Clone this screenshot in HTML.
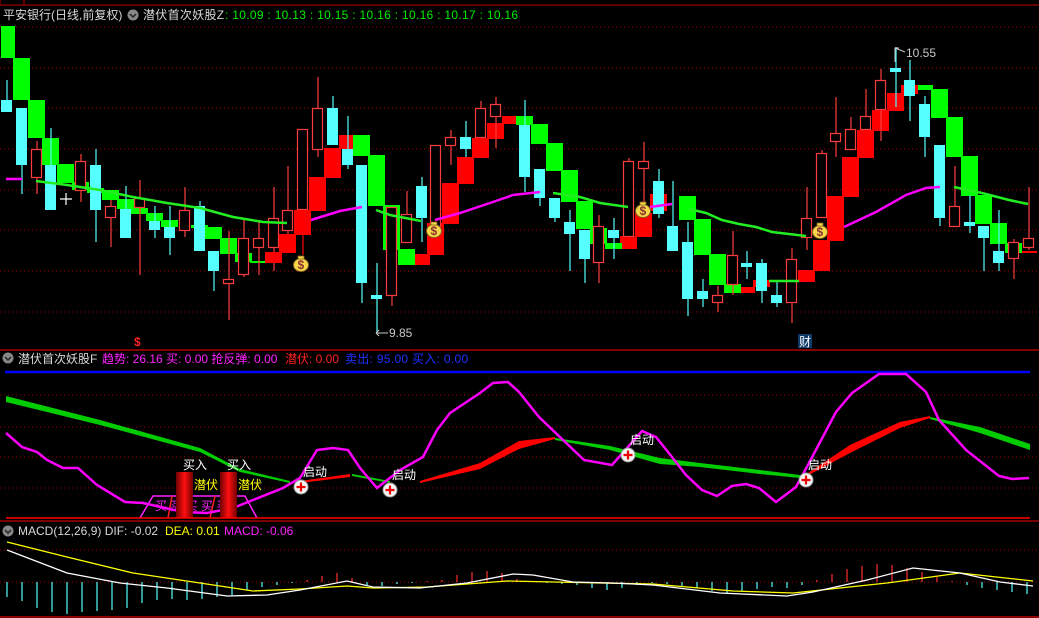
<!DOCTYPE html>
<html><head><meta charset="utf-8"><style>
html,body{margin:0;padding:0;background:#000;width:1039px;height:618px;overflow:hidden}
svg{display:block}
text{font-family:"Liberation Sans","Noto Sans CJK SC",sans-serif;font-size:12px}
</style></head><body>
<svg id="s" width="1039" height="618" viewBox="0 0 1039 618" xmlns="http://www.w3.org/2000/svg">
<g id="grid" stroke="#a00000" stroke-width="1" stroke-dasharray="1,3"></g>
<line x1="24" y1="5" x2="1039" y2="5" stroke="#c00000"/>
<rect x="0" y="-1" width="24" height="6" fill="none" stroke="#c00000"/>
<g id="cd"></g>
<g id="ln" fill="none" stroke-width="2.5"></g>
<text x="3" y="19" fill="#d8d8d8">平安银行(日线,前复权)</text>
<circle cx="133" cy="15" r="5.5" fill="#888"/><path d="M130 14l3 3 3-3" stroke="#222" stroke-width="1.5" fill="none"/>
<text x="143" y="19" fill="#d8d8d8" letter-spacing="0.3">潜伏首次妖股Z</text>
<text x="225" y="19" fill="#00ee00" letter-spacing="0.3">: 10.09 : 10.13 : 10.15 : 10.16 : 10.16 : 10.17 : 10.16</text>
<text x="906" y="57" fill="#c8c8c8">10.55</text>
<path d="M895 62v-14h4M895 48l10 4" stroke="#c8c8c8" fill="none"/>
<text x="389" y="337" fill="#c8c8c8">9.85</text>
<path d="M376 333h12M376 333l3-3M376 333l3 3" stroke="#c8c8c8" fill="none"/>
<text x="134" y="346" fill="#ff2020" font-weight="bold">$</text>
<rect x="798" y="334" width="14" height="14" fill="#103a6a"/>
<text x="799" y="346" fill="#fff">财</text>
<path d="M60 199h12M66 193v12" stroke="#fff" stroke-width="1.2"/>
<g id="bags"></g>
<line x1="0" y1="350" x2="1039" y2="350" stroke="#d00000" stroke-width="1.2"/>
<circle cx="8" cy="358" r="5.5" fill="#888"/><path d="M5 357l3 3 3-3" stroke="#222" stroke-width="1.5" fill="none"/>
<text x="18" y="363" fill="#d8d8d8">潜伏首次妖股F</text>
<text x="102" y="363" fill="#ff20ff">趋势: 26.16  买: 0.00  抢反弹: 0.00</text>
<text x="285" y="363" fill="#ff2020">潜伏: 0.00</text>
<text x="345" y="363" fill="#2030ff" letter-spacing="0.3">卖出: 95.00  买入: 0.00</text>
<line x1="5" y1="372" x2="1030" y2="372" stroke="#0000ff" stroke-width="2.5"/>
<g id="mid"></g>
<line x1="6" y1="518" x2="1030" y2="518" stroke="#ff0000" stroke-width="1.5"/>
<line x1="0" y1="521" x2="1039" y2="521" stroke="#c00000" stroke-width="1.2"/>
<circle cx="8" cy="531" r="5.5" fill="#888"/><path d="M5 530l3 3 3-3" stroke="#222" stroke-width="1.5" fill="none"/>
<text x="18" y="535" fill="#d8d8d8">MACD(12,26,9) DIF: -0.02</text>
<text x="165" y="535" fill="#ffff00">DEA: 0.01</text>
<text x="224" y="535" fill="#ff20ff">MACD: -0.06</text>
<g id="hist"></g>
<polyline fill="none" stroke="#ffff00" stroke-width="1.3" points="7,542 67,557 133,573 200,583 253,591 300,589 347,586 373,588 427,587 507,581 600,583 653,584 733,591 793,593 840,588 887,583 960,573 1033,581"/>
<polyline fill="none" stroke="#ffffff" stroke-width="1.3" points="7,550 67,573 120,583 167,588 227,596 267,595 300,590 347,581 373,587 420,588 467,583 513,574 533,575 573,582 613,583 653,585 720,593 787,596 813,592 867,580 913,568 960,573 1000,582 1033,586"/>
<line x1="0" y1="617" x2="1039" y2="617" stroke="#c00000" stroke-width="1.5"/>
</svg>
<script>
var NS="http://www.w3.org/2000/svg",S=document.getElementById('s');
function el(p,t,a,txt){var e=document.createElementNS(NS,t);for(var k in a)e.setAttribute(k,a[k]);if(txt)e.textContent=txt;document.getElementById(p).appendChild(e);return e;}
[27,68,108,149,190,230,271,312,395,427,457,488,550,582].forEach(function(y){el('grid','line',{x1:0,y1:y,x2:1039,y2:y});});
var C=[
['g',1,15,26,58],['g',13,30,58,100],['g',28,45,100,138],['g',42,59,138,165],['g',57,74,164,183],['g',72,89,182,190],['g',87,104,188,193],['g',102,119,190,200],['g',117,134,199,209],['g',131,148,208,214],['g',146,163,213,221],['g',161,178,220,227],['g',191,208,225,228],['g',205,222,227,239],['g',220,237,238,254],['g',235,252,253,262],['g',250,267,261,263],
['c',1,12,100,112,80,112],['c',16,27,108,165,108,194],['c',45,56,165,210,128,210],['c',90,101,165,210,149,242],['c',120,131,209,238,186,238],['c',149,160,221,230,206,238],['c',164,175,227,238,206,255],['c',194,205,206,251,201,251],['c',208,219,251,271,251,291],['c',327,338,108,145,96,145],
['h',31,42,149,178,141,194],['h',75,86,161,191,154,202],['h',105,116,206,218,200,247],['h',134,145,198,208,180,275],['h',179,190,210,231,187,237],['h',223,234,279,284,231,320],['h',238,249,238,275,219,277],['h',253,264,238,248,220,275],['h',268,279,218,248,187,271],['h',282,293,210,231,166,247],['h',297,308,129,210,129,210],['h',312,323,108,150,77,157],
['r',265,282,252,263],['r',279,296,234,253],['r',294,311,210,235,210,255],['r',309,326,177,211],['r',324,341,148,178],['r',339,353,135,149],
['r',415,430,254,265],['r',427,444,223,255],['r',442,459,183,224],['r',457,474,157,184],['r',472,489,138,158],['r',487,504,123,139],['r',502,516,116,124],['r',620,637,236,249],['r',635,652,213,237],['r',650,667,194,211],
['g',353,370,135,156],['g',368,385,155,206],['g',383,400,205,250],['g',398,415,249,265],['g',516,533,116,125],['g',531,548,124,144],['g',546,563,143,171],['g',561,578,170,202],['g',576,593,201,229],['g',590,607,228,244],['g',605,622,243,249],['g',679,696,196,220],
['c',342,353,149,165,116,169],['c',356,367,165,283,165,303],['c',371,382,295,299,263,333],['c',416,427,186,218,177,242],['c',460,471,137,149,121,157],['c',519,530,125,177,100,192],['c',534,545,169,198,169,206],['c',549,560,198,218,198,222],['c',564,575,222,234,210,271],['c',579,590,230,259,230,283],['c',608,619,230,238,218,259],['c',653,664,181,214,169,218],['c',667,678,226,251,181,251],['c',682,693,242,299,222,316],
['h',386,397,207,296,207,306],['h',401,412,214,243,191,243],['h',430,441,145,227,145,227],['h',445,456,137,146,130,165],['h',475,486,108,138,101,138],['h',490,501,104,117,97,148],['h',593,604,226,263,215,283],['h',623,634,161,237,158,237],['h',638,649,161,169,142,202],
['g',694,711,219,255],['g',709,726,254,285],['g',724,741,284,293],['g',916,933,85,90],['g',931,948,89,118],['g',946,963,117,157],['g',961,978,156,196],['g',975,992,195,224],['g',990,1007,223,244],['g',1005,1022,243,253],
['r',741,755,287,293],['r',753,770,280,287],['r',798,815,270,282],['r',813,830,240,271],['r',827,844,196,241],['r',842,859,157,197],['r',857,874,130,158],['r',872,889,110,131],['r',887,904,93,111],['r',901,918,85,94],['r',1022,1037,251,253],
['c',697,708,291,299,279,307],['c',741,752,263,267,251,279],['c',756,767,263,291,259,303],['c',771,782,295,303,280,307],['c',890,901,68,72,47,107],['c',904,915,80,96,60,121],['c',919,930,104,137,96,157],['c',934,945,145,218,145,226],['c',964,975,222,226,195,233],['c',978,989,226,238,226,271],['c',993,1004,251,263,210,271],
['h',712,723,295,303,286,312],['h',727,738,255,285,231,295],['h',786,797,259,303,248,323],['h',801,812,218,238,187,250],['h',816,827,153,218,150,218],['h',830,841,133,142,97,157],['h',845,856,129,150,117,150],['h',860,871,116,130,89,130],['h',875,886,80,110,69,141],['h',949,960,206,227,166,227],['h',1008,1019,242,259,239,279],['h',1023,1034,238,248,187,250]
];
var col={c:'#55ffff',g:'#00ff00',r:'#ff0000',h:'#ff3c3c'};
C.forEach(function(d){var t=d[0],x1=d[1],x2=d[2],y1=d[3],y2=d[4],c=col[t];
 if(d.length>5){var cx=(x1+x2)/2+0.5;el('cd','line',{x1:cx,y1:d[5],x2:cx,y2:d[6],stroke:c,'stroke-width':1.2});}
 if(t=='h')el('cd','rect',{x:x1+0.5,y:y1+0.5,width:x2-x1-1,height:Math.max(1,y2-y1-1),fill:'#000',stroke:c,'stroke-width':1.2});
 else el('cd','rect',{x:x1,y:y1,width:x2-x1,height:Math.max(2,y2-y1),fill:c});
});
function pl(g,pts,c,w){el(g,'polyline',{points:pts,fill:'none',stroke:c,'stroke-width':w||2.5});}
pl('ln','36,181 67,185 100,190 133,197 167,203 200,208 233,217 263,222 287,223','#22ee22');
pl('ln','376,210 390,215 421,221','#22ee22');
pl('ln','553,193 580,197 600,203 628,207','#22ee22');
pl('ln','689,209 706,213 722,220 739,224 756,227 772,232 806,236','#22ee22');
pl('ln','769,281 799,281','#22ee22');
pl('ln','954,187 982,193 1009,200 1028,204','#22ee22');
pl('ln','6,179 22,179','#ff00ff');pl('ln','311,220 340,211 362,207','#ff00ff');
pl('ln','435,220 460,213 490,203 513,195 540,192','#ff00ff');pl('ln','650,207 672,204','#ff00ff');
pl('ln','844,227 876,212 906,195 926,188 940,187','#ff00ff');
[[301,264],[434,230],[643,210],[820,231]].forEach(function(p){
 el('bags','ellipse',{cx:p[0],cy:p[1]+1,rx:7.5,ry:6.5,fill:'#f8d848',stroke:'#806020','stroke-width':1});
 el('bags','rect',{x:p[0]-3,y:p[1]-8,width:6,height:3,fill:'#f8d848',stroke:'#806020','stroke-width':0.8});
 el('bags','text',{x:p[0]-3.5,y:p[1]+5,fill:'#8a3030','font-size':'10','font-weight':'bold'},'$');
});
function band(g,pts,th,c){var top=pts.map(function(p){return p[0]+','+p[1];});var bot=pts.slice().reverse().map(function(p,i){var t=th[pts.length-1-i];return p[0]+','+(p[1]+t);});el(g,'polygon',{points:top.concat(bot).join(' '),fill:c});}
band('mid',[[6,396],[100,420],[200,448],[240,469],[290,481]],[6,5,4,3,2],'#00cc00');
band('mid',[[300,481],[350,474]],[2,3],'#ff0000');
band('mid',[[352,474],[390,481]],[2,2],'#00cc00');
band('mid',[[420,481],[480,463],[519,441],[555,437]],[2,6,8,2],'#ff0000');
band('mid',[[555,438],[610,446],[660,458],[700,463],[760,470],[800,475]],[2,4,6,4,4,3],'#00cc00');
band('mid',[[805,475],[850,445],[900,422],[930,416]],[2,8,6,2],'#ff0000');
band('mid',[[930,417],[980,427],[1030,444]],[2,6,6],'#00cc00');
el('mid','polyline',{points:'140,518 153,496 245,496 257,518',fill:'none',stroke:'#ff20ff','stroke-width':1.5});
el('mid','text',{x:155,y:510,fill:'#ff20ff','font-size':'12'},'买 买  买 买  买');
el('mid','line',{x1:172,y1:496,x2:168,y2:518,stroke:'#ff2020','stroke-width':1.5});
el('mid','line',{x1:215,y1:496,x2:210,y2:518,stroke:'#ff2020','stroke-width':1.5});
pl('mid','6,433 22,447 37,452 47,460 63,468 78,468 97,485 125,502 143,503 183,512 207,513 233,508 253,500 283,488 300,478 317,450 333,448 348,450 360,468 377,488 400,470 423,457 437,430 450,413 480,393 493,383 508,382 519,392 539,417 584,460 612,465 642,431 656,437 672,457 686,475 702,490 717,496 732,486 746,484 759,488 776,502 796,487 809,463 836,412 852,393 879,374 906,374 926,392 939,420 966,450 999,476 1012,479 1029,478','#ff00ff',2.5);
var gr=document.createElementNS(NS,'linearGradient');gr.setAttribute('id','cg');
[['0','#700000'],['0.5','#ff1010'],['1','#700000']].forEach(function(s){var st=document.createElementNS(NS,'stop');st.setAttribute('offset',s[0]);st.setAttribute('stop-color',s[1]);gr.appendChild(st);});
var df=document.createElementNS(NS,'defs');df.appendChild(gr);S.insertBefore(df,S.firstChild);
[176,220].forEach(function(x){el('mid','rect',{x:x,y:472,width:17,height:46,fill:'url(#cg)'});
 el('mid','text',{x:x+7,y:469,fill:'#fff'},'买入');el('mid','text',{x:x+18,y:489,fill:'#ffff00'},'潜伏');});
[[301,487],[390,490],[628,455],[806,480]].forEach(function(p){
 el('mid','circle',{cx:p[0],cy:p[1],r:7,fill:'#f4f4f4',stroke:'#999','stroke-width':1});
 el('mid','path',{d:'M'+(p[0]-4.5)+' '+p[1]+'h9M'+p[0]+' '+(p[1]-4.5)+'v9',stroke:'#ee0000','stroke-width':2.2});
 el('mid','text',{x:p[0]+2,y:p[1]-11,fill:'#fff'},'启动');});
var H=[-15,-19,-26,-30,-32,-30,-29,-28,-26,-21,-18,-17,-18,-17,-15,-13,-8,-5,-3,-1,2,6,9,4,-3,-4,-2,-1,1,2,7,10,11,9,3,1,-1,-2,-3,-6,-8,-6,-3,-1,-2,-4,-6,-9,-12,-9,-7,-5,-6,-3,2,8,13,16,18,17,14,10,5,1,-3,-6,-8,-10,-12];
H.forEach(function(v,k){var x=7+15*k;el('hist','line',{x1:x,y1:582,x2:x,y2:582-v,stroke:v>0?'#ff3030':'#55ffff','stroke-width':1.2});});
</script>
</body></html>
